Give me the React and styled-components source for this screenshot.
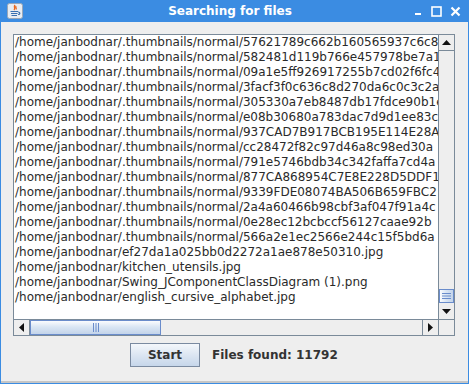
import React from 'react'
import styled, { createGlobalStyle } from 'styled-components'

const files = [
  '/home/janbodnar/.thumbnails/normal/57621789c662b160565937c6c8',
  '/home/janbodnar/.thumbnails/normal/582481d119b766e457978be7a1',
  '/home/janbodnar/.thumbnails/normal/09a1e5ff926917255b7cd02f6fc4',
  '/home/janbodnar/.thumbnails/normal/3facf3f0c636c8d270da6c0c3c2a',
  '/home/janbodnar/.thumbnails/normal/305330a7eb8487db17fdce90b1e',
  '/home/janbodnar/.thumbnails/normal/e08b30680a783dac7d9d1ee83c',
  '/home/janbodnar/.thumbnails/normal/937CAD7B917BCB195E114E28A1',
  '/home/janbodnar/.thumbnails/normal/cc28472f82c97d46a8c98ed30a',
  '/home/janbodnar/.thumbnails/normal/791e5746bdb34c342faffa7cd4a',
  '/home/janbodnar/.thumbnails/normal/877CA868954C7E8E228D5DDF1',
  '/home/janbodnar/.thumbnails/normal/9339FDE08074BA506B659FBC2',
  '/home/janbodnar/.thumbnails/normal/2a4a60466b98cbf3af047f91a4c',
  '/home/janbodnar/.thumbnails/normal/0e28ec12bcbccf56127caae92b',
  '/home/janbodnar/.thumbnails/normal/566a2e1ec2566e244c15f5bd6a',
  '/home/janbodnar/ef27da1a025bb0d2272a1ae878e50310.jpg',
  '/home/janbodnar/kitchen_utensils.jpg',
  '/home/janbodnar/Swing_JComponentClassDiagram (1).png',
  '/home/janbodnar/english_cursive_alphabet.jpg',
]

const GlobalStyle = createGlobalStyle`
  body {
    margin: 0;
    font-family: "DejaVu Sans", sans-serif;
  }
`

const Frame = styled.div`
  width: 469px;
  height: 384px;
  box-sizing: border-box;
  background: #3b8ce2;
  display: flex;
  flex-direction: column;
  padding: 0 1px 1px 1px;
`

const TitleBar = styled.div`
  height: 22px;
  display: flex;
  align-items: center;
  padding: 0 6px;
  color: #fff;
`

const Title = styled.div`
  flex: 1;
  text-align: center;
  font-weight: bold;
  font-size: 12px;
  padding-left: 24px;
`

const Controls = styled.div`
  display: flex;
  align-items: center;
  gap: 8px;
  padding-right: 1px;
`

const Body = styled.div`
  flex: 1;
  background: #eeeeee;
  border-bottom: 2px solid #c6c6c6;
  display: flex;
  flex-direction: column;
  padding: 12px 13px 0 12px;
`

const ScrollPane = styled.div`
  height: 302px;
  border: 1px solid #7a8a99;
  display: grid;
  grid-template-columns: 1fr 16px;
  grid-template-rows: 1fr 16px;
  box-sizing: border-box;
`

const List = styled.div`
  background: #fff;
  overflow: hidden;
  padding-left: 1px;
`

const Row = styled.div`
  height: 15px;
  line-height: 15px;
  font-size: 12px;
  color: #2a2a2a;
  white-space: nowrap;
`

const VTrack = styled.div`
  background: #eeeeee;
  border-left: 1px solid #7a8a99;
  display: flex;
  flex-direction: column;
`

const HTrack = styled.div`
  background: #eeeeee;
  border-top: 1px solid #7a8a99;
  display: flex;
`

const ArrowButton = styled.div`
  width: ${p => (p.$v ? '15px' : '16px')};
  height: ${p => (p.$v ? '16px' : '15px')};
  box-sizing: border-box;
  background: #eeeeee;
  display: flex;
  align-items: center;
  justify-content: center;
  border: 1px solid #7a8a99;
  border-width: ${p => p.$edges};
  flex: none;
`

const Thumb = styled.div`
  background: linear-gradient(${p => (p.$v ? 'to right' : 'to bottom')}, #fbfcfe, #dae6f4 45%, #c3d4ea);
  border: 1px solid #6a8ccb;
  box-sizing: border-box;
  display: flex;
  align-items: center;
  justify-content: center;
  flex: none;
`

const Spacer = styled.div`
  flex: ${p => p.$grow || 1};
`

const Corner = styled.div`
  background: #eeeeee;
  border-left: 1px solid #7a8a99;
  border-top: 1px solid #7a8a99;
`

const Footer = styled.div`
  display: flex;
  align-items: center;
  padding: 7px 0 0 117px;
  gap: 12px;
`

const Button = styled.button`
  width: 70px;
  height: 24px;
  border: 1px solid #7a8aa0;
  background: linear-gradient(to bottom, #f4f7fb, #dce6f2 50%, #c6d6ea);
  font-family: "DejaVu Sans", sans-serif;
  font-weight: bold;
  font-size: 12px;
  color: #333;
  padding: 0;
`

const Label = styled.span`
  font-weight: bold;
  font-size: 12px;
  color: #333;
`

const JavaIcon = () => (
  <svg width="16" height="16" viewBox="0 0 16 16">
    <rect x="0.5" y="0.5" width="15" height="15" rx="2" fill="#e8ecf2" stroke="#9aa7b8" />
    <path d="M8 2 C6 4 9 5 7 7 M9 3 C8 4.5 10 5 9 6.5" stroke="#e8641b" strokeWidth="1.3" fill="none" />
    <path d="M3.5 8.5 H11 M4 10.5 H10.5 M4.5 12.5 H10 M11 9 C13.5 9 13.5 11.5 11 11.5" stroke="#3a6fb0" strokeWidth="1.2" fill="none" />
  </svg>
)

const App = () => (
  <>
    <GlobalStyle />
    <Frame>
      <TitleBar>
        <JavaIcon />
        <Title>Searching for files</Title>
        <Controls>
          <svg width="10" height="10" viewBox="0 0 10 10">
            <rect x="2" y="7" width="6" height="2" fill="#fff" />
          </svg>
          <svg width="11" height="11" viewBox="0 0 11 11">
            <rect x="1" y="1" width="9" height="9" fill="none" stroke="#fff" strokeWidth="1.6" />
          </svg>
          <svg width="11" height="11" viewBox="0 0 11 11">
            <path d="M1.5 1.5 L9.5 9.5 M9.5 1.5 L1.5 9.5" stroke="#fff" strokeWidth="2.2" />
          </svg>
        </Controls>
      </TitleBar>
      <Body>
        <ScrollPane>
          <List>
            {files.map(f => (
              <Row key={f}>{f}</Row>
            ))}
          </List>
          <VTrack>
            <ArrowButton $v $edges="0 0 1px 0">
              <svg width="9" height="5" viewBox="0 0 9 5"><path d="M0 5 L4.5 0 L9 5 Z" fill="#111" /></svg>
            </ArrowButton>
            <Spacer />
            <Thumb $v style={{ height: 14 }}>
              <svg width="9" height="6" viewBox="0 0 9 6">
                <path d="M0 0.5 H9 M0 3 H9 M0 5.5 H9" stroke="#6a8ccb" strokeWidth="1" />
              </svg>
            </Thumb>
            <ArrowButton $v $edges="0">
              <svg width="9" height="5" viewBox="0 0 9 5"><path d="M0 0 L4.5 5 L9 0 Z" fill="#111" /></svg>
            </ArrowButton>
          </VTrack>
          <HTrack>
            <ArrowButton $edges="0 1px 0 0">
              <svg width="5" height="9" viewBox="0 0 5 9"><path d="M5 0 L0 4.5 L5 9 Z" fill="#111" /></svg>
            </ArrowButton>
            <Thumb style={{ width: 131 }}>
              <svg width="6" height="9" viewBox="0 0 6 9">
                <path d="M0.5 0 V9 M3 0 V9 M5.5 0 V9" stroke="#6a8ccb" strokeWidth="1" />
              </svg>
            </Thumb>
            <Spacer />
            <ArrowButton $edges="0 0 0 1px">
              <svg width="5" height="9" viewBox="0 0 5 9"><path d="M0 0 L5 4.5 L0 9 Z" fill="#111" /></svg>
            </ArrowButton>
          </HTrack>
          <Corner />
        </ScrollPane>
        <Footer>
          <Button>Start</Button>
          <Label>Files found: 11792</Label>
        </Footer>
      </Body>
    </Frame>
  </>
)

export default App
